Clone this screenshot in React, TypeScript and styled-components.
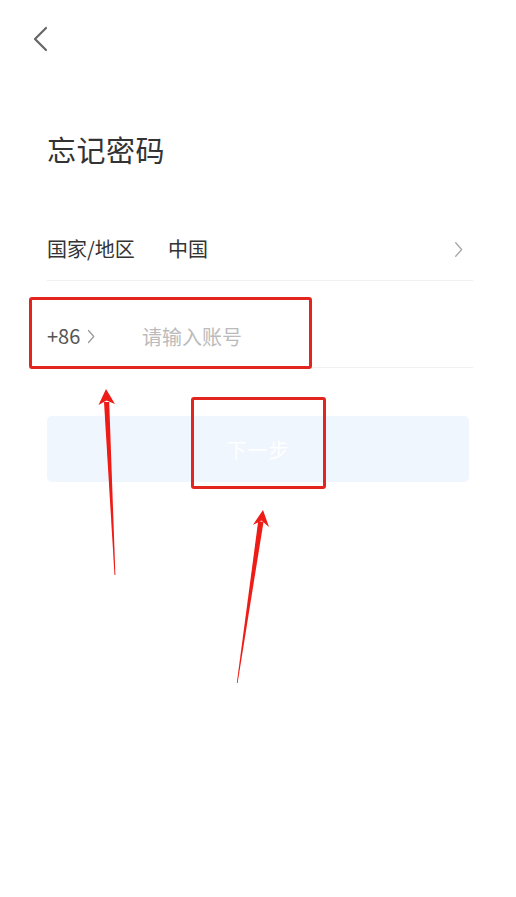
import React from "react";
import styled, { createGlobalStyle } from "styled-components";

const GlobalStyle = createGlobalStyle`
  html, body {
    margin: 0;
    padding: 0;
    background: #fff;
  }
  body {
    font-family: "Noto Sans CJK SC", "Noto Sans", "Liberation Sans", sans-serif;
  }
`;

const Page = styled.div`
  position: relative;
  width: 100vw;
  height: 100vh;
  overflow: hidden;
  background: #fff;
`;

const Header = styled.div`
  display: flex;
  align-items: center;
  height: 26px;
  padding: 26px 0 0 32px;
`;

const BackButton = styled.button`
  display: flex;
  padding: 0;
  border: none;
  background: none;
  cursor: pointer;
`;

const Content = styled.div`
  display: flex;
  flex-direction: column;
  padding: 0 43px 0 47px;
`;

const Title = styled.h1`
  margin: 77px 0 25px 0;
  font-size: 29px;
  font-weight: 400;
  line-height: 40px;
  color: #333;
  letter-spacing: 0.5px;
`;

const Row = styled.div`
  display: flex;
  align-items: center;
  height: 24px;
  padding: 43px 0 19px 0;
  border-bottom: 1px solid #f0f0f0;
  font-size: 20px;
  line-height: 24px;
  color: #333;
`;

const Label = styled.span`
  width: 121px;
  flex-shrink: 0;
`;

const Value = styled.span`
  flex: 1;
`;

const Arrow = styled.span`
  display: flex;
  margin-right: 10px;
`;

const Code = styled.span`
  display: flex;
  align-items: center;
  gap: 7px;
  width: 95px;
  flex-shrink: 0;
  color: #555;
`;

const Input = styled.input`
  flex: 1;
  border: none;
  outline: none;
  padding: 0;
  font-family: inherit;
  font-size: 20px;
  color: #333;
  background: transparent;
  &::placeholder {
    color: #bbb;
  }
`;

const NextButton = styled.button`
  margin-top: 48px;
  width: 422px;
  height: 66px;
  border: none;
  border-radius: 5px;
  background: #f0f6fe;
  color: #fff;
  font-family: inherit;
  font-size: 20px;
  letter-spacing: 1px;
`;

const Mark = styled.div<{ $x: number; $y: number; $w: number; $h: number }>`
  position: absolute;
  left: ${(p) => p.$x}px;
  top: ${(p) => p.$y}px;
  width: ${(p) => p.$w}px;
  height: ${(p) => p.$h}px;
  border: 3px solid #e3251f;
  border-radius: 3px;
  box-sizing: border-box;
  pointer-events: none;
`;

const ArrowLayer = styled.svg`
  position: absolute;
  left: 0;
  top: 0;
  pointer-events: none;
`;

const Chevron = ({ size, color }: { size: number; color: string }) => (
  <svg width={size * 0.55} height={size} viewBox="0 0 11 20" fill="none">
    <path d="M2 2 L9 10 L2 18" stroke={color} strokeWidth="1.6" strokeLinecap="round" strokeLinejoin="round" />
  </svg>
);

export default function App() {
  return (
    <Page>
      <GlobalStyle />
      <Header>
        <BackButton aria-label="back">
          <svg width="16" height="26" viewBox="0 0 16 26" fill="none">
            <path d="M14 2 L3 13 L14 24" stroke="#666" strokeWidth="2.2" strokeLinecap="round" strokeLinejoin="round" />
          </svg>
        </BackButton>
      </Header>
      <Content>
        <Title>忘记密码</Title>
        <Row>
          <Label>国家/地区</Label>
          <Value>中国</Value>
          <Arrow>
            <Chevron size={17} color="#aaa" />
          </Arrow>
        </Row>
        <Row>
          <Code>
            +86
            <Chevron size={15} color="#999" />
          </Code>
          <Input placeholder="请输入账号" />
        </Row>
        <NextButton>下一步</NextButton>
      </Content>

      <Mark $x={29} $y={297} $w={283} $h={72} />
      <Mark $x={191} $y={397} $w={135} $h={92} />

      <ArrowLayer width="516" height="897" viewBox="0 0 516 897">
        <g fill="#ee1c16">
          <polygon points="106,389 98.5,405 106.5,400.5 115,404" />
          <polygon points="109.2,402 104,402 114.5,575 115.4,575" />
          <polygon points="263,510 252.9,525 261.4,520.5 269,527" />
          <polygon points="258.2,521 263.5,522 237.6,683 236.8,683" />
        </g>
      </ArrowLayer>
    </Page>
  );
}
